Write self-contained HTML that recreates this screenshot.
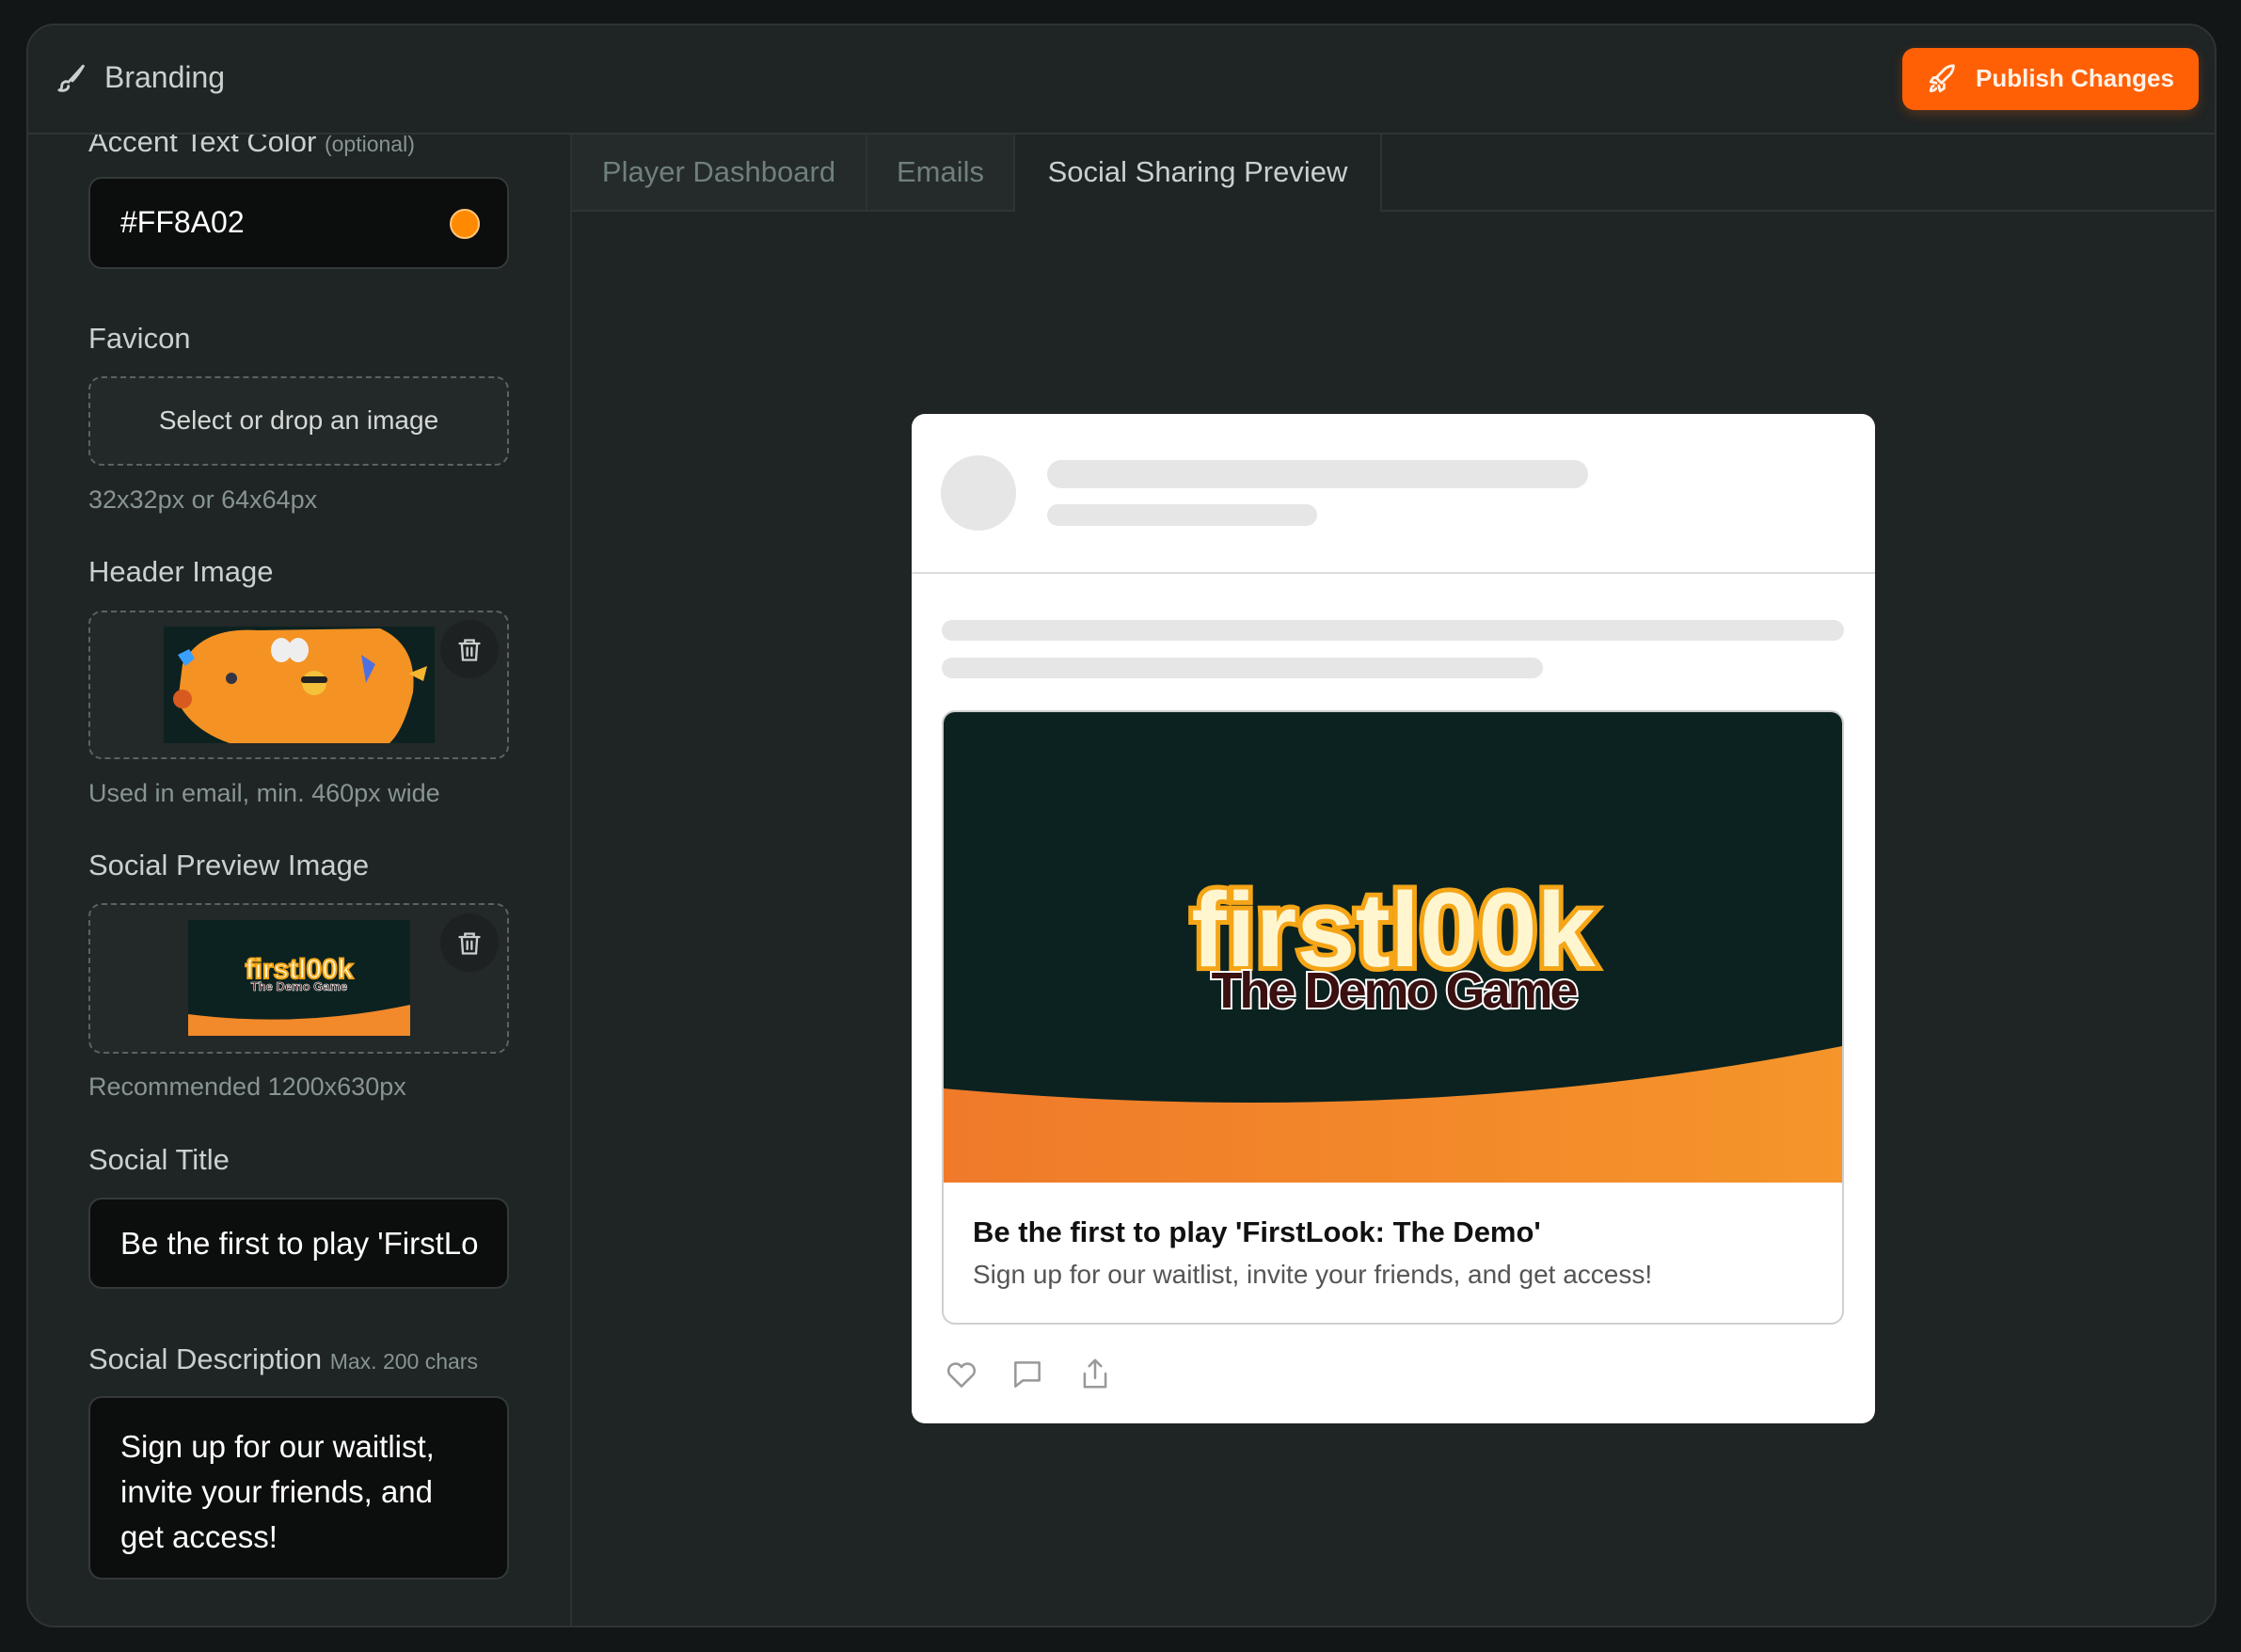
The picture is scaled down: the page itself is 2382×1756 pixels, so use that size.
<!DOCTYPE html>
<html><head><meta charset="utf-8"><style>
*{box-sizing:border-box;margin:0;padding:0}
body{width:2382px;height:1756px;background:#131617;font-family:"Liberation Sans",sans-serif;position:relative;overflow:hidden;color:#c9d0ce}
.a{position:absolute}
.panel{left:28px;top:25px;width:2328px;height:1705px;background:#1f2424;border:2px solid #2e3333;border-radius:30px;overflow:hidden}
.lbl{font-size:31px;color:#c9d0ce;left:94px}
.hint{font-size:27px;color:#879591;left:94px}
.inp{left:94px;width:447px;background:#0c0d0d;border:2px solid #333a39;border-radius:14px;color:#fff;font-size:32px}
.dz{left:94px;width:447px;border:2px dashed #5b6362;border-radius:14px;background:#232828}
.trash{width:62px;height:62px;border-radius:50%;background:#1d2121}
.sk{background:#e6e6e6;border-radius:20px}
</style></head><body>
<div class="a panel"></div>
<svg class="a" style="left:60px;top:66px" width="34" height="34" viewBox="0 0 24 24" fill="none" stroke="#c9d0ce" stroke-width="2" stroke-linecap="round" stroke-linejoin="round"><path d="M20 3 L10 14"/><path d="M20 3c-2 4-6 9-8 11"/><path d="M9 15c-2-1-5 0-5 3 0 2-1 3-2 3 3 1 7 0 7-3"/></svg>
<div class="a" style="left:111px;top:64px;font-size:32px;color:#c9d0ce">Branding</div>
<div class="a" style="left:2022px;top:51px;width:315px;height:66px;background:#ff6005;border-radius:13px;box-shadow:0 4px 12px rgba(255,96,5,.25)"></div>
<svg class="a" style="left:2048px;top:67px" width="34" height="34" viewBox="0 0 24 24" fill="none" stroke="#fff1e6" stroke-width="2" stroke-linecap="round" stroke-linejoin="round"><path d="M14 4c3-2 6-2 6-2s0 3-2 6l-7 7-4-4z"/><path d="M8 11H5l-2 3 4 1M13 16v3l-3 2-1-4"/><path d="M5 17c-2 1-2 4-2 4s3 0 4-2"/></svg>
<div class="a" style="left:2100px;top:68px;font-size:26px;font-weight:bold;color:#fff1e6">Publish Changes</div>
<div class="a" style="left:30px;top:141px;width:2324px;height:2px;background:#2e3333"></div>
<div class="a" style="left:30px;top:143px;width:578px;height:1585px;overflow:hidden">
 <div class="a" style="left:64px;top:-10px;font-size:31px;color:#c9d0ce">Accent Text Color <span style="font-size:23px;color:#879591">(optional)</span></div>
</div>
<div class="a" style="left:606px;top:143px;width:2px;height:1585px;background:#2c3231"></div>
<div class="a inp" style="top:188px;height:98px;padding:28px 32px">#FF8A02</div>
<div class="a" style="left:478px;top:222px;width:32px;height:32px;border-radius:50%;background:#ff8a02;border:2px solid #ffc67a"></div>
<div class="a lbl" style="top:342px">Favicon</div>
<div class="a dz" style="top:400px;height:95px;text-align:center;line-height:90px;font-size:28px;color:#d3d9d7">Select or drop an image</div>
<div class="a hint" style="top:516px">32x32px or 64x64px</div>
<div class="a lbl" style="top:590px">Header Image</div>
<div class="a dz" style="top:649px;height:158px"></div>
<svg class="a" style="left:174px;top:666px" width="288" height="124" viewBox="0 0 288 124"><rect width="288" height="124" fill="#0d2220"/><path d="M20 40 Q40 0 100 4 L230 2 Q270 20 265 70 Q255 110 240 124 L70 124 Q30 110 15 80 Z" fill="#f49224"/><ellipse cx="125" cy="25" rx="11" ry="13" fill="#eee"/><ellipse cx="143" cy="25" rx="11" ry="13" fill="#eee"/><circle cx="160" cy="60" r="13" fill="#f5c13a"/><rect x="146" y="53" width="28" height="7" rx="3" fill="#222"/><path d="M15 30 l12-6 6 10-10 8z" fill="#3aa0ff"/><circle cx="20" cy="77" r="10" fill="#d85a20"/><path d="M210 30 l15 10-10 20z" fill="#5070e0"/><path d="M260 50 l20-8-4 16z" fill="#f5b530"/><circle cx="72" cy="55" r="6" fill="#334"/></svg>
<div class="a trash" style="left:468px;top:659px"></div>
<svg class="a" style="left:485px;top:676px" width="28" height="30" viewBox="0 0 24 24" fill="none" stroke="#c9d0ce" stroke-width="2" stroke-linecap="round"><path d="M3 6h18M8 6V3h8v3M5 6l1 15h12l1-15M10 10v7M14 10v7"/></svg>
<div class="a hint" style="top:828px">Used in email, min. 460px wide</div>
<div class="a lbl" style="top:902px">Social Preview Image</div>
<div class="a dz" style="top:960px;height:160px"></div>
<svg class="a" style="left:200px;top:978px" width="236" height="123" viewBox="0 0 236 123"><rect width="236" height="123" fill="#0b2220"/><path d="M0 100 Q118 115 236 90 V123 H0z" fill="#f2892a"/><text x="118" y="62" text-anchor="middle" font-family="Liberation Sans" font-weight="bold" font-size="30" fill="#fff6d0" stroke="#f5a516" stroke-width="2">firstl00k</text><text x="118" y="75" text-anchor="middle" font-family="Liberation Sans" font-weight="bold" font-size="13" fill="#3a1010" stroke="#fff" stroke-width=".6">The Demo Game</text></svg>
<div class="a trash" style="left:468px;top:971px"></div>
<svg class="a" style="left:485px;top:988px" width="28" height="30" viewBox="0 0 24 24" fill="none" stroke="#c9d0ce" stroke-width="2" stroke-linecap="round"><path d="M3 6h18M8 6V3h8v3M5 6l1 15h12l1-15M10 10v7M14 10v7"/></svg>
<div class="a hint" style="top:1140px">Recommended 1200x630px</div>
<div class="a lbl" style="top:1215px">Social Title</div>
<div class="a inp" style="top:1273px;height:97px;padding:28px 32px;overflow:hidden"><div style="white-space:nowrap;width:380px;overflow:hidden;font-size:33px">Be the first to play 'FirstLook: The Demo'</div></div>
<div class="a lbl" style="top:1427px">Social Description <span style="font-size:23px;color:#879591">Max. 200 chars</span></div>
<div class="a inp" style="top:1484px;height:195px;padding:28px 32px;line-height:48px;font-size:33px">Sign up for our waitlist,<br>invite your friends, and<br>get access!</div>
<div class="a" style="left:608px;top:143px;width:1746px;height:82px;background:#1f2424;border-bottom:2px solid #2e3333"></div>
<div class="a" style="left:608px;top:143px;width:314px;height:82px;background:#252a2a;border-right:2px solid #2e3333;border-bottom:2px solid #2e3333;font-size:31px;color:#6f807c;text-align:center;line-height:80px">Player Dashboard</div>
<div class="a" style="left:922px;top:143px;width:157px;height:82px;background:#252a2a;border-right:2px solid #2e3333;border-bottom:2px solid #2e3333;font-size:31px;color:#6f807c;text-align:center;line-height:80px">Emails</div>
<div class="a" style="left:1079px;top:143px;width:390px;height:82px;background:#1f2424;border-right:2px solid #2e3333;font-size:31px;color:#c9d0ce;text-align:center;line-height:80px">Social Sharing Preview</div>
<div class="a" style="left:969px;top:440px;width:1024px;height:1073px;background:#fff;border-radius:14px"></div>
<div class="a" style="left:1000px;top:484px;width:80px;height:80px;border-radius:50%;background:#e6e6e6"></div>
<div class="a sk" style="left:1113px;top:489px;width:575px;height:30px"></div>
<div class="a sk" style="left:1113px;top:536px;width:287px;height:23px"></div>
<div class="a" style="left:969px;top:608px;width:1024px;height:2px;background:#dcdcdc"></div>
<div class="a sk" style="left:1001px;top:659px;width:959px;height:22px"></div>
<div class="a sk" style="left:1001px;top:699px;width:639px;height:22px"></div>
<div class="a" style="left:1001px;top:755px;width:959px;height:653px;border:2px solid #cfcfcf;border-radius:14px;overflow:hidden">
<svg class="a" style="left:0;top:0" width="955" height="500" viewBox="0 0 955 500"><defs><linearGradient id="o" x1="0" x2="1"><stop offset="0" stop-color="#f07a2a"/><stop offset="1" stop-color="#f5952a"/></linearGradient></defs><rect width="955" height="500" fill="#0b2220"/><path d="M0 400 Q500 445 955 355 V500 H0z" fill="url(#o)"/>
<text x="478" y="270" text-anchor="middle" font-family="Liberation Sans" font-weight="bold" font-size="112" fill="#fff6d0" stroke="#f5a516" stroke-width="10" paint-order="stroke">firstl00k</text>
<text x="478" y="314" text-anchor="middle" font-family="Liberation Sans" font-weight="bold" font-size="54" fill="#3a1010" stroke="#fff" stroke-width="4" paint-order="stroke" letter-spacing="-3">The Demo Game</text></svg>
<div class="a" style="left:31px;top:535px;font-size:31px;font-weight:bold;color:#111">Be the first to play 'FirstLook: The Demo'</div>
<div class="a" style="left:31px;top:582px;font-size:28px;color:#555">Sign up for our waitlist, invite your friends, and get access!</div>
</div>
<svg class="a" style="left:1002px;top:1442px" width="40" height="38" viewBox="0 0 24 24" fill="none" stroke="#999" stroke-width="1.6" stroke-linejoin="round"><path d="M12 20 4 12a4.5 4.5 0 0 1 8-5 4.5 4.5 0 0 1 8 5z"/></svg>
<svg class="a" style="left:1073px;top:1442px" width="38" height="38" viewBox="0 0 24 24" fill="none" stroke="#999" stroke-width="1.6" stroke-linejoin="round"><path d="M4 4h16v12H9l-5 4z"/></svg>
<svg class="a" style="left:1145px;top:1440px" width="38" height="40" viewBox="0 0 24 24" fill="none" stroke="#999" stroke-width="1.6" stroke-linecap="round" stroke-linejoin="round"><path d="M12 15V3M8 7l4-4 4 4M5 12v9h14v-9"/></svg>
</body></html>
